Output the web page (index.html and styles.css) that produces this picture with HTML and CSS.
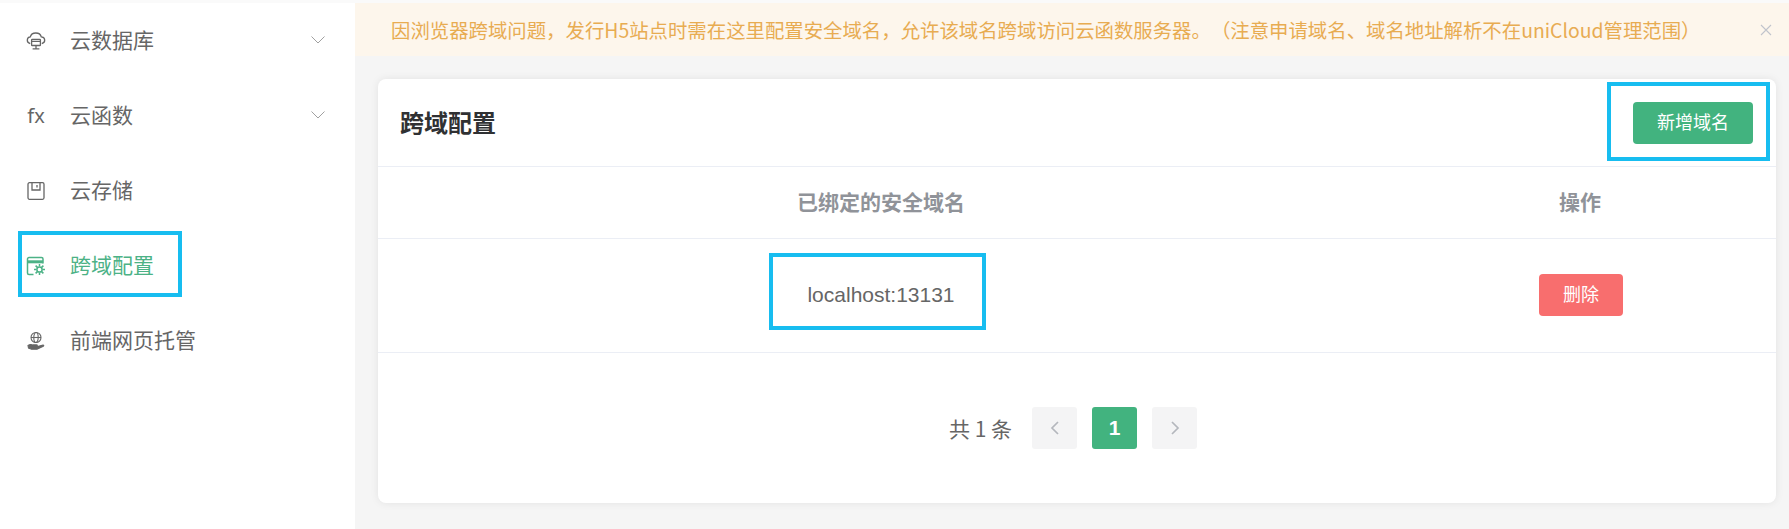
FILE: index.html
```html
<!DOCTYPE html>
<html lang="zh-CN">
<head>
<meta charset="utf-8">
<title>跨域配置</title>
<link rel="stylesheet" href="styles.css">
</head>
<body>
<div class="app">
  <aside class="sidebar">
    <div class="nav-item">
      <svg class="nav-icon" viewBox="0 0 20 20" fill="none" stroke="currentColor" stroke-width="1.3"><path d="M4.2 12.6C2.3 12 1.2 10.6 1.3 9c.1-1.7 1.4-3 3-3.1C4.9 3.500 7 2 9.800 2c2.800 0 4.900 1.500 5.500 3.900 1.800.1 3.300 1.400 3.400 3.100.1 1.600-1 3-2.900 3.600"/><rect x="5.600" y="8.300" width="8.800" height="6.200" rx=".6"/><path d="M5.600 10.300h8.800M10 14.500v3M6.600 17.800h6.800"/></svg>
      <span class="nav-label">云数据库</span>
      <svg class="chev" viewBox="0 0 16 10" fill="none" stroke="currentColor" stroke-width="1"><path d="M1.500 1.500 8 8l6.500-6.500"/></svg>
    </div>
    <div class="nav-item">
      <span class="nav-icon fx">fx</span>
      <span class="nav-label">云函数</span>
      <svg class="chev" viewBox="0 0 16 10" fill="none" stroke="currentColor" stroke-width="1"><path d="M1.500 1.500 8 8l6.500-6.500"/></svg>
    </div>
    <div class="nav-item">
      <svg class="nav-icon" viewBox="0 0 20 20" fill="none" stroke="currentColor" stroke-width="1.300"><path d="M3.500 1.700h13a1.500 1.500 0 0 1 1.500 1.500v13.600a1.500 1.500 0 0 1-1.500 1.500h-13A1.500 1.500 0 0 1 2 16.800V3.200a1.500 1.500 0 0 1 1.500-1.500Z"/><path d="M6 2v7h8V2M11 4v2.500"/></svg>
      <span class="nav-label">云存储</span>
    </div>
    <div class="nav-item active">
      <svg class="nav-icon" viewBox="0 0 20 20" fill="none" stroke="currentColor" stroke-width="1.500"><path d="M7.500 18.500H3a1.500 1.500 0 0 1-1.500-1.500V3A1.500 1.500 0 0 1 3 1.500h12.500A1.500 1.500 0 0 1 17 3v4.500"/><path d="M1.500 5.800H17" stroke-width="3"/><circle cx="13.500" cy="13.500" r="2.600"/><path d="M13.500 8v2.500M13.500 16.500V19M8 13.500h2.500M16.500 13.500H19M9.600 9.600l1.800 1.800M15.600 15.600l1.800 1.800M17.400 9.600l-1.800 1.800M11.400 15.600l-1.800 1.800"/></svg>
      <span class="nav-label">跨域配置</span>
    </div>
    <div class="nav-item">
      <svg class="nav-icon" viewBox="0 0 20 20" fill="none" stroke="currentColor" stroke-width="1.100"><circle cx="10" cy="6.500" r="5"/><ellipse cx="10" cy="6.500" rx="2.200" ry="5"/><path d="M5 6.500h10"/><path d="M2 14.500c2-1.500 3.500-1.200 5-.6h3.500c1.100 0 1.100 1.500 0 1.500H8l3.500.2 5.500-1.600c.9 0 1 .8.300 1.200L11 18.200H5.500L2.500 17Z" fill="currentColor"/></svg>
      <span class="nav-label">前端网页托管</span>
    </div>
  </aside>

  <main class="main">
    <div class="notice">
      <span class="notice-text">因浏览器跨域问题，发行H5站点时需在这里配置安全域名，允许该域名跨域访问云函数服务器。（注意申请域名、域名地址解析不在uniCloud管理范围）</span>
      <svg class="notice-close" viewBox="0 0 12 12" fill="none" stroke="currentColor" stroke-width="1.100"><path d="m1 1 10 10M11 1 1 11"/></svg>
    </div>

    <section class="card">
      <header class="card-head">
        <h1 class="card-title">跨域配置</h1>
        <button class="btn btn-add">新增域名</button>
      </header>
      <div class="row row-head">
        <div class="cell">已绑定的安全域名</div>
        <div class="cell">操作</div>
      </div>
      <div class="row row-body">
        <div class="cell">localhost:13131</div>
        <div class="cell"><button class="btn btn-del">删除</button></div>
      </div>
      <nav class="pager">
        <span class="pager-total">共 1 条</span>
        <span class="page-box">
          <svg class="page-arrow" viewBox="0 0 10 16" fill="none" stroke="currentColor" stroke-width="1.700"><path d="M8 2 2 8l6 6"/></svg>
        </span>
        <span class="page-box page-current">1</span>
        <span class="page-box">
          <svg class="page-arrow" viewBox="0 0 10 16" fill="none" stroke="currentColor" stroke-width="1.700"><path d="m2 2 6 6-6 6"/></svg>
        </span>
      </nav>
    </section>
  </main>

  <div class="mark mark-nav"></div>
  <div class="mark mark-add"></div>
  <div class="mark mark-host"></div>
</div>
</body>
</html>
```
FILE: styles.css
```css
* { box-sizing: border-box; }
html, body { margin: 0; padding: 0; }
body {
  width: 1789px;
  height: 529px;
  overflow: hidden;
  background: #f5f5f5;
  font-family: "Noto Sans CJK SC", "Liberation Sans", sans-serif;
  color: #666;
  text-spacing-trim: space-all;
}
.app {
  position: relative;
  display: flex;
  width: 1789px;
  height: 529px;
  padding-top: 3px;
  background: linear-gradient(#fafafa 0 3px, #f5f5f5 3px);
}
.sidebar {
  flex: 0 0 355px;
  background: #fff;
}
.nav-item {
  display: flex;
  align-items: center;
  height: 75px;
  padding: 0 29px 0 26px;
  font-size: 21px;
  color: #666;
}
.nav-item.active { color: #4cb286; }
.nav-icon {
  flex: 0 0 20px;
  width: 20px;
  height: 20px;
  margin-right: 24px;
}
.fx {
  font-family: "Noto Sans", sans-serif;
  font-size: 20px;
  line-height: 20px;
  text-align: center;
}
.nav-label { flex: 1; line-height: 28px; margin-bottom: 4px; }
.chev { width: 16px; height: 10px; color: #a0a0a0; margin-top: -2px; }

.main {
  flex: 1;
  min-width: 0;
  padding-right: 13px;
}
.notice {
  display: flex;
  align-items: center;
  justify-content: space-between;
  height: 53px;
  margin-right: -13px;
  padding: 0 17px 0 36px;
  background: #fdf6ec;
  color: #e6a23c;
  font-size: 19.400px;
}
.notice-text { white-space: nowrap; opacity: .88; }
.notice-close { width: 12px; height: 12px; color: #c0c4cc; }

.card {
  width: 1398px;
  height: 424px;
  margin: 23px 0 0 23px;
  background: #fff;
  border-radius: 8px;
  box-shadow: 0 0 8px rgba(0, 0, 0, .08);
}
.card-head {
  display: flex;
  align-items: center;
  justify-content: space-between;
  height: 88px;
  padding: 0 23px 0 22px;
  border-bottom: 1px solid #ebeef5;
}
.card-title {
  margin: 0 0 2px;
  font-size: 24px;
  font-weight: 700;
  color: #303133;
}
.btn {
  display: inline-block;
  height: 42px;
  border: 0;
  border-radius: 4px;
  color: #fff;
  font-family: inherit;
  font-size: 18px;
  padding: 0 0 3px;
}
.btn-add { width: 120px; background: #42b37f; }
.btn-del { width: 84px; margin-left: 2px; background: #f86e6e; }

.row {
  display: grid;
  grid-template-columns: 1006px 1fr;
  border-bottom: 1px solid #ebeef5;
}
.cell { text-align: center; }
.row-head {
  height: 72px;
  padding-bottom: 4px;
  align-items: center;
  font-size: 21px;
  font-weight: 700;
  color: #909399;
}
.row-body {
  height: 114px;
  padding-bottom: 2px;
  align-items: center;
  font-family: "Liberation Sans", sans-serif;
  font-size: 21px;
  color: #666;
}
.row-body .cell { line-height: 42px; }
.row-body .cell .btn { vertical-align: top; font-family: "Noto Sans CJK SC", sans-serif; }

.pager {
  display: flex;
  align-items: center;
  justify-content: center;
  gap: 15px;
  margin-top: 54px;
  padding-right: 8px;
  font-size: 21px;
  color: #666;
}
.pager-total { margin-right: 5px; }
.page-box {
  display: flex;
  align-items: center;
  justify-content: center;
  width: 45px;
  height: 42px;
  border-radius: 3px;
  background: #f4f4f5;
  color: #b4b7bd;
}
.page-current {
  background: #42b37f;
  color: #fff;
  font-family: "Liberation Sans", sans-serif;
  font-weight: 700;
  font-size: 21px;
}
.page-arrow { width: 10px; height: 16px; }

.mark {
  position: absolute;
  border: 4px solid #17bdf0;
  pointer-events: none;
}
.mark-nav { left: 18px; top: 231px; width: 164px; height: 66px; }
.mark-add { left: 1607px; top: 82px; width: 163px; height: 79px; }
.mark-host { left: 769px; top: 253px; width: 217px; height: 77px; }
```
